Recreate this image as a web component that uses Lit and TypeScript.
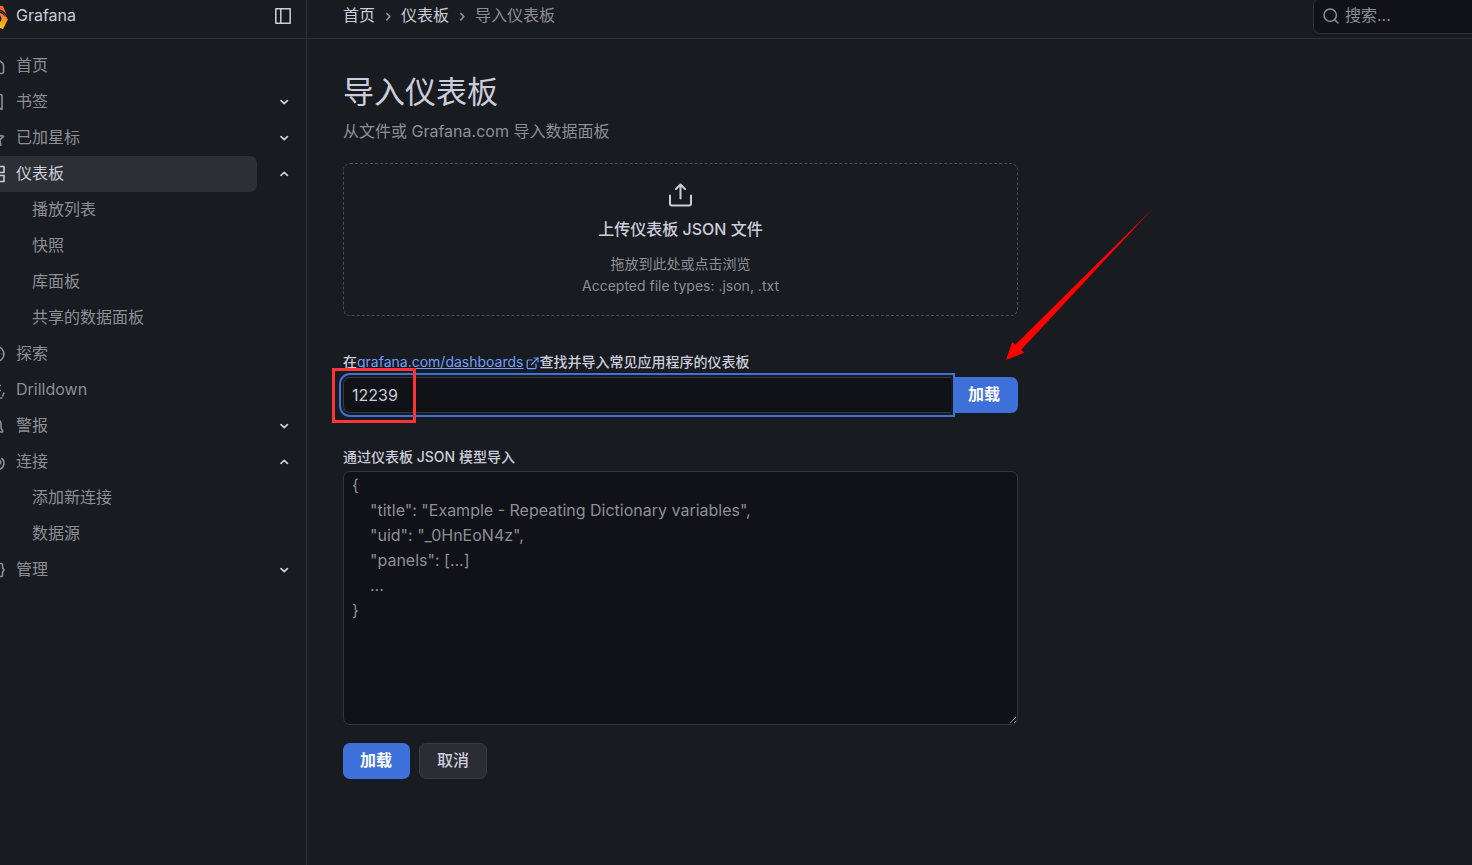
import { LitElement, html, css, svg, nothing } from "lit";
import { customElement, state } from "lit/decorators.js";

interface NavItem {
  label: string;
  icon: string;
  active?: boolean;
  open?: boolean;
  expandable?: boolean;
  children?: string[];
}

const NAV: NavItem[] = [
  { label: "首页", icon: "home" },
  { label: "书签", icon: "bookmark", expandable: true },
  { label: "已加星标", icon: "star", expandable: true },
  {
    label: "仪表板",
    icon: "apps",
    active: true,
    expandable: true,
    open: true,
    children: ["播放列表", "快照", "库面板", "共享的数据面板"],
  },
  { label: "探索", icon: "compass" },
  { label: "Drilldown", icon: "drilldown" },
  { label: "警报", icon: "bell", expandable: true },
  {
    label: "连接",
    icon: "link",
    expandable: true,
    open: true,
    children: ["添加新连接", "数据源"],
  },
  { label: "管理", icon: "cog", expandable: true },
];

const MODEL_PLACEHOLDER = `{
    "title": "Example - Repeating Dictionary variables",
    "uid": "_0HnEoN4z",
    "panels": [...]
    ...
}`;

const ICONS: Record<string, unknown> = {
  home: svg`<path d="M2 8a3 3 0 0 1 1-2.200L7.500 2a2.200 2.200 0 0 1 3 0L15.300 5.800a3 3 0 0 1 1.200 2.200v6.500a2 2 0 0 1-2 2h-10.500a2 2 0 0 1-2-2z M6.500 16.500v-5h5v5"/>`,
  bookmark: svg`<path d="M3 3a1.500 1.500 0 0 1 1.500-1.500h9A1.500 1.500 0 0 1 15 3v13.500l-6-3.500-6 3.500z"/>`,
  star: svg`<path d="m9 1.500 2.400 4.900 5.300.8-3.800 3.700.9 5.300L9 13.700l-4.800 2.500.9-5.300L1.300 7.200l5.300-.8z"/>`,
  apps: svg`<path d="M1.500 1.500h6v6h-6z M10.500 1.500h6.500v6h-6.500z M1.500 10.500h6v6h-6z M10.500 10.500h6.500v6h-6.500z"/>`,
  compass: svg`<circle cx="9.500" cy="9" r="7.500"/><path d="m12.500 5.500-2 5-5 2 2-5z M14.500 9h.8"/>`,
  drilldown: svg`<path d="M2 3h6 M2 7h4 M11.500 4.500h2.500 M11 9.500h3 M17 11.500l-1.500 4 M8 17h7.500 M11 11l-2 4"/>`,
  bell: svg`<path d="M9 2a5 5 0 0 1 5 5v4l1.500 2.500v1.500h-13v-1.500L4 11V7a5 5 0 0 1 5-5z M7 17h4"/>`,
  link: svg`<path d="M14.500 5a6.500 6.500 0 0 1-3 11.500 M13.500 8v3.500 M13.500 8l-4-4 M9 16.500a6 6 0 0 1-4-9"/>`,
  cog: svg`<path d="M5 2.500h2L9 1l2 1.500h3.500a1 1 0 0 1 1 1V6.500L17 9l-1.500 2.500v3a1 1 0 0 1-1 1H11L9 17l-2-1.500H3.500a1 1 0 0 1-1-1v-3L1 9l1.500-2.500v-3a1 1 0 0 1 1-1z"/><circle cx="9" cy="9" r="2.500"/>`,
};

@customElement("app-root")
export class AppRoot extends LitElement {
  static styles = css`
    :host {
      --bg: #181b1f;
      --field: #111217;
      --line: #2e3136;
      --text: #ccccdc;
      --muted: #8d8e98;
      --blue: #3d71d9;
      --link: #6e9fff;
      display: block;
      min-height: 100vh;
      overflow: hidden;
      background: var(--bg);
      color: var(--text);
      color-scheme: dark;
      font: 16px/24px Inter, "Noto Sans CJK SC", sans-serif;
    }
    *,
    *::before {
      box-sizing: border-box;
    }
    a {
      color: inherit;
      text-decoration: none;
    }
    svg {
      display: block;
      flex: none;
      fill: none;
      stroke: currentColor;
    }
    button {
      font: inherit;
      color: inherit;
      border: 0;
      background: none;
      padding: 0;
      cursor: pointer;
    }
    .shell {
      display: grid;
      grid-template-columns: 327px 1fr;
      min-height: 100vh;
      margin-left: -20px;
    }
    .side {
      border-right: 1px solid var(--line);
    }
    .bar {
      display: flex;
      align-items: center;
      height: 46px;
      margin-top: -7px;
      border-bottom: 1px solid var(--line);
    }
    .brand {
      display: flex;
      align-items: center;
      gap: 8px;
      flex: 1;
    }
    .brand span,
    .crumbs a,
    .current,
    .search input {
      padding-bottom: 2px;
    }
    .dock {
      margin-right: 14px;
    }
    .nav,
    .sub {
      list-style: none;
      margin: 0;
      padding: 0;
    }
    .nav {
      padding-top: 9px;
      color: var(--muted);
    }
    .row {
      display: flex;
      align-items: center;
      justify-content: space-between;
      height: 36px;
      padding-right: 13px;
    }
    .item {
      display: flex;
      align-items: center;
      gap: 11px;
      width: 277px;
      height: 36px;
      padding: 0 0 2px 7px;
      border-radius: 0 7px 7px 0;
    }
    .item svg {
      margin-top: 2px;
    }
    .active {
      background: #2d2f34;
      color: var(--text);
    }
    .toggle {
      color: var(--text);
    }
    .sub a {
      display: block;
      height: 36px;
      padding: 5px 0 0 52px;
    }
    .top {
      justify-content: space-between;
      padding-left: 36px;
    }
    .crumbs {
      display: flex;
      align-items: center;
      gap: 4px;
      margin: 0;
      padding: 0;
      list-style: none;
    }
    .crumbs li {
      display: flex;
      align-items: center;
      gap: 4px;
    }
    .crumbs svg,
    .current {
      color: var(--muted);
    }
    .search {
      display: flex;
      align-items: center;
      gap: 6px;
      width: 170px;
      height: 36px;
      margin-right: -11px;
      padding-left: 9px;
      border: 1px solid var(--line);
      border-radius: 7px;
      background: var(--field);
      color: var(--muted);
    }
    .search input {
      flex: 1;
      min-width: 0;
      padding: 0 0 2px;
      border: 0;
      outline: 0;
      background: none;
      color: var(--text);
      font: inherit;
    }
    ::placeholder {
      color: var(--muted);
      opacity: 1;
    }
    .page {
      max-width: 747px;
      padding: 33px 36px;
    }
    h1 {
      margin: 0;
      font-size: 31px;
      line-height: 40px;
      font-weight: 400;
    }
    .lead {
      margin: 7px 0 20px;
      color: var(--muted);
    }
    .drop {
      display: flex;
      flex-direction: column;
      align-items: center;
      height: 153px;
      padding-top: 17px;
      border: 1px dashed #4a4c52;
      border-radius: 7px;
      text-align: center;
      cursor: pointer;
    }
    .file {
      position: absolute;
      width: 1px;
      height: 1px;
      opacity: 0;
    }
    .drop-title {
      margin: 8px 0 12px;
      font-weight: 500;
    }
    .hint {
      color: var(--muted);
      font-size: 14px;
      line-height: 22px;
    }
    .label {
      display: block;
      font-size: 14px;
      line-height: 18px;
      font-weight: 500;
    }
    .find {
      margin: 37px 0 6px;
    }
    .find a {
      color: var(--link);
      font-weight: 400;
    }
    .find span {
      text-decoration: underline;
    }
    .find svg {
      display: inline-block;
      margin-left: 3px;
      vertical-align: -3px;
    }
    .load {
      position: relative;
      display: flex;
    }
    .gid {
      position: relative;
      z-index: 1;
      flex: 1;
      min-width: 0;
      height: 36px;
      padding: 0 8px;
      border: 1px solid #34363c;
      border-right: 0;
      border-radius: 7px 0 0 7px;
      outline: 0;
      background: var(--field);
      color: var(--text);
      font: inherit;
      box-shadow: 0 0 0 2px var(--bg), 0 0 0 4px var(--blue);
    }
    .btn {
      height: 36px;
      padding: 0 18px 2px 17px;
      border-radius: 7px;
      background: var(--blue);
      color: #fff;
      font-weight: 600;
    }
    .joined {
      border-radius: 0 7px 7px 0;
    }
    .quiet {
      padding: 0 17px 2px;
      border: 1px solid #393b41;
      background: #2b2d32;
      color: var(--text);
      font-weight: 500;
    }
    .mark {
      position: absolute;
      z-index: 2;
      left: -11px;
      top: -9px;
      width: 84px;
      height: 55px;
      border: 3px solid #fb3535;
      pointer-events: none;
    }
    .arrow {
      position: absolute;
      z-index: 2;
      right: -135px;
      bottom: 53px;
      pointer-events: none;
    }
    .model-label {
      margin: 35px 0 5px;
    }
    .model {
      display: block;
      width: 100%;
      height: 254px;
      padding: 1px 8px;
      border: 1px solid #34363c;
      border-radius: 7px;
      outline: 0;
      background: var(--field);
      color: var(--text);
      font: inherit;
      line-height: 25px;
      resize: vertical;
    }
    .actions {
      display: flex;
      gap: 9px;
      margin-top: 18px;
    }
  `;

  @state() private items = NAV;

  private toggle(item: NavItem) {
    this.items = this.items.map((i) => (i === item ? { ...i, open: !i.open } : i));
  }

  private chevron(d: string) {
    return html`<svg width="18" height="18" viewBox="0 0 18 18" stroke-width="1.700" stroke-linecap="round" stroke-linejoin="round" aria-hidden="true"><path d=${d} /></svg>`;
  }

  private navItem(item: NavItem) {
    return html`<li>
      <div class="row">
        <a class="item ${item.active ? "active" : ""}" href="#">
          <svg width="18" height="18" viewBox="0 0 18 18" stroke-width="1.600" stroke-linejoin="round" aria-hidden="true">${ICONS[item.icon]}</svg>
          ${item.label}
        </a>
        ${item.expandable
          ? html`<button class="toggle" aria-label=${item.label} aria-expanded=${item.open ? "true" : "false"} @click=${() => this.toggle(item)}>
              ${this.chevron(item.open ? "m6 10.300 3.200-2.900 3.200 2.900" : "m6 7.600 3.200 2.900 3.200-2.900")}
            </button>`
          : nothing}
      </div>
      ${item.open && item.children
        ? html`<ul class="sub">
            ${item.children.map((c) => html`<li><a href="#">${c}</a></li>`)}
          </ul>`
        : nothing}
    </li>`;
  }

  render() {
    return html`<div class="shell">
      <aside class="side">
        <div class="bar">
          <a class="brand" href="#">
            <svg width="28" height="28" viewBox="0 0 28 28" aria-hidden="true">
              <defs>
                <linearGradient id="flame" x1="0" y1="0" x2="0" y2="1">
                  <stop offset="0" stop-color="#f05a28" />
                  <stop offset="0.500" stop-color="#f8842a" />
                  <stop offset="1" stop-color="#fbca0a" />
                </linearGradient>
              </defs>
              <path fill="url(#flame)" stroke="none" d="M5 6 10 7l5-4 8 1 2 5c1 2 2 4 2 7l-1 .5-1.500-3.500c-1-3-5-5-9-4-4 1-6 4-5 8 1 3 4 5 7 4 2-.5 4-2 4-4 0-3-2-4.500-4-4.500v-2c4 0 7 3 8 5l2.500 1.500-2 4-3 6-6-2-5 1-2-5-3-3 2-5z" />
              <path d="M18.500 8c4 .5 6.500 3 8.500 7" stroke="#181b1f" stroke-width="1.400" />
            </svg>
            <span>Grafana</span>
          </a>
          <button class="dock" aria-label="侧边栏">
            <svg width="18" height="18" viewBox="0 0 18 18" stroke-width="1.500" stroke-linejoin="round"><path d="M1.800 1.800h14.400v14.400H1.800z M6.800 2v14" /></svg>
          </button>
        </div>
        <nav>
          <ul class="nav">
            ${this.items.map((i) => this.navItem(i))}
          </ul>
        </nav>
      </aside>
      <div>
        <header class="bar top">
          <ol class="crumbs">
            <li><a href="#">首页</a>${this.chevron("m7.800 6.500 3 3.200-3 3.200")}</li>
            <li><a href="#">仪表板</a>${this.chevron("m7.800 6.500 3 3.200-3 3.200")}</li>
            <li class="current">导入仪表板</li>
          </ol>
          <label class="search">
            <svg width="16" height="16" viewBox="0 0 16 16" stroke-width="1.500" stroke-linecap="round" aria-hidden="true"><circle cx="7.200" cy="7.200" r="6.200" /><path d="m11.800 11.800 3.200 3.200" /></svg>
            <input type="text" placeholder="搜索..." aria-label="搜索" />
          </label>
        </header>
        <main class="page">
          <h1>导入仪表板</h1>
          <p class="lead">从文件或 Grafana.com 导入数据面板</p>
          <label class="drop">
            <input class="file" type="file" accept=".json,.txt" />
            <svg width="28" height="28" viewBox="0 0 28 28" stroke-width="2" stroke-linecap="round" stroke-linejoin="round" aria-hidden="true"><path d="M3 14.500v8a2 2 0 0 0 2 2h17a2 2 0 0 0 2-2v-8 M13.500 17.500v-14 M9 8 13.500 3.500 18 8" /></svg>
            <span class="drop-title">上传仪表板 JSON 文件</span>
            <span class="hint">拖放到此处或点击浏览</span>
            <span class="hint">Accepted file types: .json, .txt</span>
          </label>
          <label class="label find" for="gid">在<a href="#"><span>grafana.com/dashboards</span><svg width="13" height="13" viewBox="0 0 13 13" stroke-width="1.200" stroke-linecap="round" stroke-linejoin="round" aria-hidden="true"><path d="M6 3H2.500A1.200 1.200 0 0 0 1.200 4.200v6.300a1.200 1.200 0 0 0 1.200 1.200h6.400a1.200 1.200 0 0 0 1.200-1.200V7 M8 1h4v4 M12 1 5.500 7.500" /></svg></a>查找并导入常见应用程序的仪表板</label>
          <div class="load">
            <input class="gid" id="gid" type="text" .value=${"12239"} />
            <button class="btn joined">加载</button>
            <div class="mark"></div>
            <svg class="arrow" width="147" height="152" viewBox="0 0 147 152" aria-hidden="true">
              <path fill="#ff0000" stroke="none" d="M0 152 6.300 134l2.900 2.700L147 .5 15.200 141.700l3 3z" />
            </svg>
          </div>
          <label class="label model-label" for="model">通过仪表板 JSON 模型导入</label>
          <textarea class="model" id="model" placeholder=${MODEL_PLACEHOLDER}></textarea>
          <div class="actions">
            <button class="btn">加载</button>
            <button class="btn quiet">取消</button>
          </div>
        </main>
      </div>
    </div>`;
  }
}
